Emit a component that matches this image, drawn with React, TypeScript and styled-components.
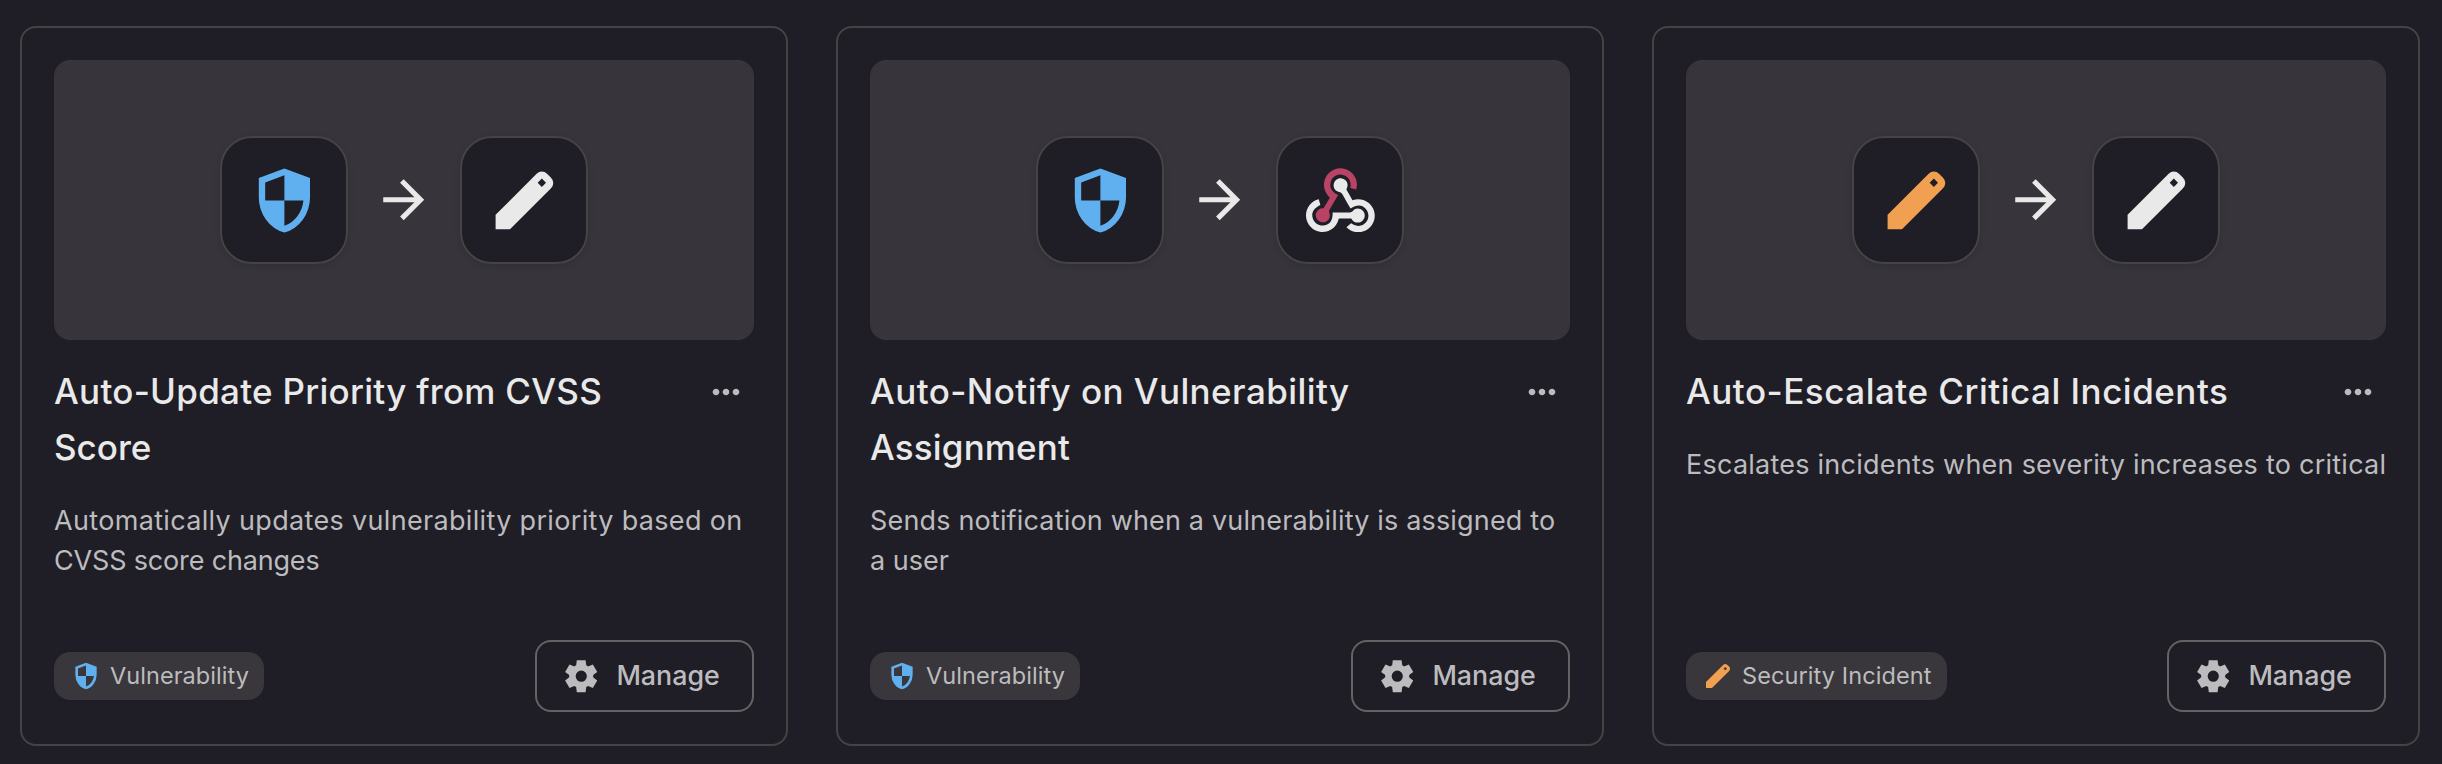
import React from "react";
import styled, { createGlobalStyle } from "styled-components";

const Global = createGlobalStyle`
  *, *::before, *::after { box-sizing: border-box; }
  body {
    margin: 0;
    background: #1f1d26;
    font-family: "Inter", "Open Sans", sans-serif;
  }
`;

const Page = styled.main`
  display: grid;
  grid-template-columns: repeat(3, 768px);
  gap: 48px;
  padding: 26px 20px 18px;
  width: 2442px;
  height: 764px;
  overflow: hidden;
`;

const Card = styled.article`
  display: flex;
  flex-direction: column;
  height: 720px;
  padding: 32px;
  border: 2px solid #444444;
  border-radius: 16px;
`;

const Preview = styled.div`
  display: flex;
  align-items: center;
  justify-content: space-between;
  padding: 0 166px;
  height: 280px;
  flex: none;
  border-radius: 16px;
  background: #37353b;
`;

const Tile = styled.div`
  display: flex;
  align-items: center;
  justify-content: center;
  width: 128px;
  height: 128px;
  border: 2px solid #444444;
  border-radius: 32px;
  background: #1f1d26;
  box-shadow: 0 2px 6px rgba(0, 0, 0, 0.12);
`;

const Header = styled.header`
  display: flex;
  align-items: flex-start;
  justify-content: space-between;
  margin-top: 24px;
`;

const Title = styled.h2`
  margin: -1px 0 1px;
  font-size: 35px;
  font-weight: 500;
  line-height: 56px;
  color: #e9e9e9;
  white-space: nowrap;
`;

const MenuButton = styled.button`
  display: flex;
  align-items: center;
  justify-content: center;
  width: 56px;
  height: 56px;
  padding: 0;
  border: 0;
  background: none;
`;

const Line = styled.span<{ $spacing: number }>`
  display: block;
  letter-spacing: ${(p) => p.$spacing}px;
`;

const Description = styled.p`
  margin: 25px 0 0;
  font-size: 27px;
  line-height: 40px;
  color: #bcbcbe;
  white-space: nowrap;
`;

const Footer = styled.footer`
  display: flex;
  align-items: center;
  justify-content: space-between;
  margin-top: auto;
`;

const Tag = styled.span<{ $spacing: number }>`
  display: flex;
  align-items: center;
  gap: 8px;
  height: 48px;
  padding: 0 15.5px 0 16px;
  border-radius: 16px;
  background: #39363c;
  color: #bcbcbe;
  font-size: 23.5px;
  letter-spacing: ${(p) => p.$spacing}px;
`;

const ManageButton = styled.button`
  display: flex;
  align-items: center;
  gap: 16px;
  width: 219px;
  height: 72px;
  padding: 0 0 0 25px;
  border: 2px solid #636363;
  border-radius: 16px;
  background: none;
  color: #bcbcbe;
  font: 500 26.8px "Inter", "Open Sans", sans-serif;
`;

const Label = styled.span`
  padding-bottom: 2px;
`;

const Svg = styled.svg`
  display: block;
  flex: none;
`;

type IconProps = { size: number; color: string };

const symbol = (d: string) =>
  function SymbolIcon({ size, color }: IconProps) {
    return (
      <Svg width={size} height={size} viewBox="0 -960 960 960" fill={color}>
        <path d={d} />
      </Svg>
    );
  };

const Shield = symbol(
  "M480-80q-139-35-229.5-159.5T160-516v-244l320-120 320 120v244q0 152-90.5 276.5T480-80Zm0-84q97-30 162-118.5T718-480H480v-315l-240 90v207q0 7 2 18h238v316Z"
);
const Pencil = symbol(
  "M120-120v-180l513-513q28-28 65-28t65 28l50 50q28 28 28 65t-28 65L300-120H120Zm578-529 52-52-52-52-52 52 52 52Z"
);
const Gear = symbol(
  "m370-80-16-128q-13-5-24.5-12T307-235l-119 50L78-375l103-78q-1-7-1-13.5v-27q0-6.5 1-13.5L78-585l110-190 119 50q11-8 23-15t24-12l16-128h220l16 128q13 5 24.5 12t22.5 15l119-50 110 190-103 78q1 7 1 13.5v27q0 6.5-2 13.5l103 78-110 190-118-50q-11 8-23 15t-24 12L590-80H370Zm112-260q58 0 99-41t41-99q0-58-41-99t-99-41q-59 0-99.5 41T342-480q0 58 40.5 99t99.5 41Z"
);
const Dots = symbol(
  "M240-400q-33 0-56.5-23.5T160-480q0-33 23.5-56.5T240-560q33 0 56.5 23.5T320-480q0 33-23.5 56.5T240-400Zm240 0q-33 0-56.5-23.5T400-480q0-33 23.5-56.5T480-560q33 0 56.5 23.5T560-480q0 33-23.5 56.5T480-400Zm240 0q-33 0-56.5-23.5T640-480q0-33 23.5-56.5T720-560q33 0 56.5 23.5T800-480q0 33-23.5 56.5T720-400Z"
);
const Arrow = symbol("M647-440H160v-80h487L423-744l57-56 320 320-320 320-57-56 224-224Z");

const Webhook = () => (
  <Svg width="69" height="64.4" viewBox="0 0 256 239">
    <path
      fill="#b84364"
      d="M119.54 100.503c-10.61 17.836-20.775 35.108-31.152 52.25-2.665 4.401-3.984 7.986-1.855 13.58 5.878 15.454-2.414 30.493-17.998 34.575-14.697 3.851-29.016-5.808-31.932-21.543-2.584-13.927 8.224-27.58 23.58-29.757 1.286-.184 2.6-.205 4.762-.367l23.358-39.168C73.612 95.465 64.868 78.39 66.803 57.23c1.368-14.957 7.25-27.883 18-38.477 20.59-20.288 52.002-23.573 76.246-8.001 23.284 14.958 33.948 44.094 24.858 69.031-6.854-1.858-13.756-3.732-21.343-5.79 2.854-13.865.743-26.315-8.608-36.981-6.178-7.042-14.106-10.733-23.12-12.093-18.072-2.73-35.815 8.88-41.08 26.618-5.976 20.132 3.069 36.575 27.784 48.967z"
    />
    <path
      fill="#e9e9e9"
      d="M149.841 79.41c7.475 13.187 15.065 26.573 22.587 39.836 38.02-11.763 66.686 9.284 76.97 31.817 12.422 27.219 3.93 59.457-20.465 76.25-25.04 17.238-56.707 14.293-78.892-7.851 5.654-4.733 11.336-9.487 17.407-14.566 21.912 14.192 41.077 13.524 55.305-3.282 12.133-14.337 11.87-35.714-.615-49.75-14.408-16.197-33.707-16.691-57.035-1.143-9.677-17.168-19.522-34.199-28.893-51.491-3.16-5.828-6.648-9.21-13.77-10.443-11.893-2.062-19.571-12.275-20.032-23.717-.453-11.316 6.214-21.545 16.634-25.53 10.322-3.949 22.435-.762 29.378 8.014 5.674 7.17 7.477 15.24 4.491 24.083-.83 2.466-1.905 4.852-3.07 7.774z"
    />
    <path
      fill="#e9e9e9"
      d="M167.707 187.21h-45.77c-4.387 18.044-13.863 32.612-30.19 41.876-12.693 7.2-26.373 9.641-40.933 7.29-26.808-4.323-48.728-28.456-50.658-55.63-2.184-30.784 18.975-58.147 47.178-64.293 1.947 7.071 3.915 14.21 5.862 21.264-25.876 13.202-34.832 29.836-27.59 50.636 6.375 18.304 24.484 28.337 44.147 24.457 20.08-3.962 30.204-20.65 28.968-47.432 19.036 0 38.088-.197 57.126.097 7.434.117 13.173-.654 18.773-7.208 9.22-10.784 26.191-9.811 36.121.374 10.148 10.409 9.662 27.157-1.077 37.127-10.361 9.62-26.73 9.106-36.424-1.26-1.992-2.136-3.562-4.673-5.533-7.298z"
    />
  </Svg>
);

const BLUE = "#60b0f0";
const ORANGE = "#f0a050";
const LIGHT = "#e9e9e9";
const MUTED = "#bcbcbe";

type TextLine = [text: string, spacing: number];
type Automation = {
  from: React.ReactNode;
  to: React.ReactNode;
  title: TextLine[];
  description: TextLine[];
  tag: TextLine;
  tagIcon: React.ReactNode;
};

const automations: Automation[] = [
  {
    from: <Shield size={76.8} color={BLUE} />,
    to: <Pencil size={76.8} color={LIGHT} />,
    title: [["Auto-Update Priority from CVSS", 0.27], ["Score", 0]],
    description: [
      ["Automatically updates vulnerability priority based on", 0.33],
      ["CVSS score changes", -0.17],
    ],
    tag: ["Vulnerability", 0.05],
    tagIcon: <Shield size={32} color={BLUE} />,
  },
  {
    from: <Shield size={76.8} color={BLUE} />,
    to: <Webhook />,
    title: [["Auto-Notify on Vulnerability", 0.42], ["Assignment", 0.15]],
    description: [
      ["Sends notification when a vulnerability is assigned to", 0.17],
      ["a user", 0],
    ],
    tag: ["Vulnerability", 0.05],
    tagIcon: <Shield size={32} color={BLUE} />,
  },
  {
    from: <Pencil size={76.8} color={ORANGE} />,
    to: <Pencil size={76.8} color={LIGHT} />,
    title: [["Auto-Escalate Critical Incidents", 0.5]],
    description: [["Escalates incidents when severity increases to critical", 0.24]],
    tag: ["Security Incident", 0.1],
    tagIcon: <Pencil size={32} color={ORANGE} />,
  },
];

const lines = (items: TextLine[]) =>
  items.map(([text, spacing]) => (
    <Line key={text} $spacing={spacing}>
      {text}
    </Line>
  ));

export default function App() {
  return (
    <>
      <Global />
      <Page>
        {automations.map((a) => (
          <Card key={a.title[0][0]}>
            <Preview>
              <Tile>{a.from}</Tile>
              <Arrow size={61.44} color={LIGHT} />
              <Tile>{a.to}</Tile>
            </Preview>
            <Header>
              <Title>{lines(a.title)}</Title>
              <MenuButton aria-label="More actions">
                <Dots size={40} color={MUTED} />
              </MenuButton>
            </Header>
            <Description>{lines(a.description)}</Description>
            <Footer>
              <Tag $spacing={a.tag[1]}>
                {a.tagIcon}
                <Label>{a.tag[0]}</Label>
              </Tag>
              <ManageButton>
                <Gear size={38.4} color={MUTED} />
                <Label>Manage</Label>
              </ManageButton>
            </Footer>
          </Card>
        ))}
      </Page>
    </>
  );
}
